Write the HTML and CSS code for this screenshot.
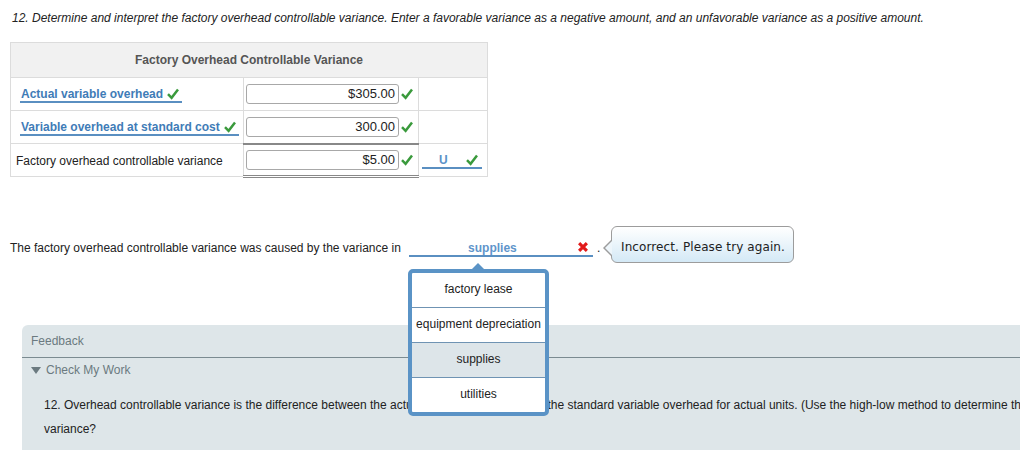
FILE: index.html
```html
<!DOCTYPE html>
<html>
<head>
<meta charset="utf-8">
<link rel="stylesheet" href="styles.css">
</head>
<body>
<div class="page">
  <p class="q">12. Determine and interpret the factory overhead controllable variance. Enter a favorable variance as a negative amount, and an unfavorable variance as a positive amount.</p>

  <table class="grid">
    <colgroup><col class="c1"><col class="c2"><col class="c3"></colgroup>
    <tr><th colspan="3">Factory Overhead Controllable Variance</th></tr>
    <tr>
      <td class="lbl"><span class="pick">Actual variable overhead<svg class="ok" viewBox="0 0 12 12"><path d="M1 6.2 L4.6 9.8 L11 1.6"/></svg></span></td>
      <td class="amt"><div class="amt-in"><span class="field">$305.00</span><svg class="ok" viewBox="0 0 12 12"><path d="M1 6.2 L4.6 9.8 L11 1.6"/></svg></div></td>
      <td></td>
    </tr>
    <tr>
      <td class="lbl"><span class="pick">Variable overhead at standard cost<svg class="ok" viewBox="0 0 12 12"><path d="M1 6.2 L4.6 9.8 L11 1.6"/></svg></span></td>
      <td class="amt total"><div class="amt-in"><span class="field">300.00</span><svg class="ok" viewBox="0 0 12 12"><path d="M1 6.2 L4.6 9.8 L11 1.6"/></svg></div></td>
      <td></td>
    </tr>
    <tr>
      <td class="lbl plain">Factory overhead controllable variance</td>
      <td class="amt dtotal"><div class="amt-in"><span class="field">$5.00</span><svg class="ok" viewBox="0 0 12 12"><path d="M1 6.2 L4.6 9.8 L11 1.6"/></svg></div></td>
      <td><span class="uselect"><span>U</span><svg class="ok" viewBox="0 0 12 12"><path d="M1 6.2 L4.6 9.8 L11 1.6"/></svg></span></td>
    </tr>
  </table>

  <div class="sentence">
    <span>The factory overhead controllable variance was caused by the variance in</span>
    <span class="select"><span class="sel-val">supplies</span><svg class="bad" viewBox="0 0 9 9"><path d="M1 1 L8 8 M8 1 L1 8"/></svg></span>
    <span class="dot">.</span>
    <div class="tooltip">Incorrect. Please try again.</div>
    <ul class="menu">
      <li>factory lease</li>
      <li>equipment depreciation</li>
      <li class="cur">supplies</li>
      <li>utilities</li>
    </ul>
  </div>

  <div class="feedback">
    <div class="fb-head">Feedback</div>
    <div class="cmw"><span class="tri"></span><span>Check My Work</span></div>
    <div class="fb-text">
      <div class="ln">12. Overhead controllable variance is the difference between the actual variable overhead and the standard variable overhead for actual units. (Use the high-low method to determine the variable overhead rate.) What caused the</div>
      <div class="ln">variance?</div>
    </div>
  </div>
</div>
</body>
</html>
```

FILE: styles.css
```css
* { box-sizing: border-box; }
html, body { margin: 0; padding: 0; }
body {
  width: 1020px;
  height: 450px;
  overflow: hidden;
  background: #fff;
  color: #222;
  font-family: "Liberation Sans", Arial, sans-serif;
  font-size: 12px;
}
.page { padding-top: 11px; }

.q {
  margin: 0 0 0 12px;
  font-style: italic;
  line-height: 14px;
  white-space: nowrap;
}

.grid {
  margin: 17px 0 0 10px;
  border-collapse: collapse;
  table-layout: fixed;
  width: 477px;
}
.c1 { width: 233px; }
.c2 { width: 175px; }
.c3 { width: 69px; }
.grid th {
  height: 35px;
  padding: 0;
  background: #f1f1f1;
  border: 1px solid #dcdcdc;
  color: #555;
  font-weight: bold;
}
.grid td {
  height: 33px;
  padding: 0;
  border: 1px solid #dcdcdc;
  vertical-align: middle;
}
.grid td.lbl { padding-left: 5px; padding-top: 1px; }
.pick {
  display: inline-flex;
  align-items: center;
  gap: 4px;
  margin-left: 4px;
  padding: 0 3px 0 1px;
  line-height: 14px;
  font-weight: bold;
  color: #3f7cb7;
  border-bottom: 2px solid #5a8fc1;
}
.ok {
  width: 12px;
  height: 12px;
  flex: none;
}
.ok path {
  fill: none;
  stroke: #3a9a3c;
  stroke-width: 2.5;
}

.grid td.amt { padding-left: 2px; }
.amt-in {
  display: flex;
  align-items: center;
  gap: 2px;
}
.field {
  width: 153px;
  height: 20px;
  border: 1px solid #a8a8a8;
  border-radius: 3px;
  padding-right: 3px;
  text-align: right;
  font-size: 13px;
  line-height: 18px;
  color: #222;
}
.grid td.total { border-bottom: 2px solid #888; }
.grid td.dtotal { border-bottom: 3px double #888; }

.uselect {
  display: flex;
  align-items: center;
  justify-content: space-between;
  width: 60px;
  margin-left: 3px;
  padding: 2px 4px 0 17px;
  line-height: 14px;
  font-weight: bold;
  color: #5b92c8;
  border-bottom: 2px solid #5a8fc1;
}

.sentence {
  position: relative;
  display: flex;
  align-items: flex-start;
  margin-top: 63px;
  padding-left: 10px;
  line-height: 14px;
}
.select {
  display: flex;
  align-items: center;
  width: 184px;
  margin-left: 8px;
  border-bottom: 2px solid #5a8fc1;
}
.sel-val {
  flex: 1;
  text-align: center;
  font-weight: bold;
  color: #5f95cb;
}
.bad {
  width: 10px;
  height: 10px;
  margin: 0 5px 2px 2px;
  flex: none;
}
.bad path {
  stroke: #e21b1b;
  stroke-width: 2.8;
  fill: none;
}
.dot { margin-left: 4px; }

.tooltip {
  position: absolute;
  left: 611px;
  top: -15px;
  width: 183px;
  height: 37px;
  padding: 6px 0 0 9px;
  border: 1px solid #9c9c9c;
  border-radius: 6px;
  background: linear-gradient(#ffffff, #d4e9f6);
  font-family: "DejaVu Sans", Verdana, sans-serif;
  font-size: 12px;
  letter-spacing: 0.1px;
  line-height: 29px;
  color: #222;
  white-space: nowrap;
}
.tooltip::before {
  content: "";
  position: absolute;
  left: -9px;
  top: 13px;
  border-top: 8px solid transparent;
  border-bottom: 8px solid transparent;
  border-right: 8px solid #9c9c9c;
}
.tooltip::after {
  content: "";
  position: absolute;
  left: -7px;
  top: 14px;
  border-top: 7px solid transparent;
  border-bottom: 7px solid transparent;
  border-right: 7px solid #eef6fb;
}

.menu {
  position: absolute;
  left: 408px;
  top: 28px;
  width: 141px;
  margin: 0;
  padding: 0;
  list-style: none;
  background: #fff;
  border: 4px solid #5a93c6;
  border-radius: 5px;
}
.menu::before {
  content: "";
  position: absolute;
  left: 59px;
  top: -10px;
  border-left: 7px solid transparent;
  border-right: 7px solid transparent;
  border-bottom: 7px solid #5a93c6;
}
.menu li {
  height: 35px;
  line-height: 32px;
  text-align: center;
  color: #222;
  border-top: 1px solid #6f93b3;
}
.menu li:first-child { border-top: 0; height: 34px; }
.menu li.cur { background: #dde5e9; }

.feedback {
  margin: 68px 0 0 22px;
  width: 1100px;
  height: 140px;
  background: #dee6e9;
  border-top-left-radius: 6px;
}
.fb-head {
  height: 33px;
  padding: 9px 0 0 9px;
  line-height: 14px;
  color: #6b7a80;
  border-bottom: 1px solid #7b8b91;
}
.cmw {
  display: flex;
  align-items: center;
  gap: 5px;
  padding: 5px 0 0 9px;
  line-height: 14px;
  color: #6b7a80;
}
.tri {
  width: 0;
  height: 0;
  border-left: 5px solid transparent;
  border-right: 5px solid transparent;
  border-top: 7px solid #6b7a80;
}
.fb-text {
  margin: 16px 0 0 22px;
  line-height: 24px;
  color: #222;
}
.ln { white-space: nowrap; }
```
